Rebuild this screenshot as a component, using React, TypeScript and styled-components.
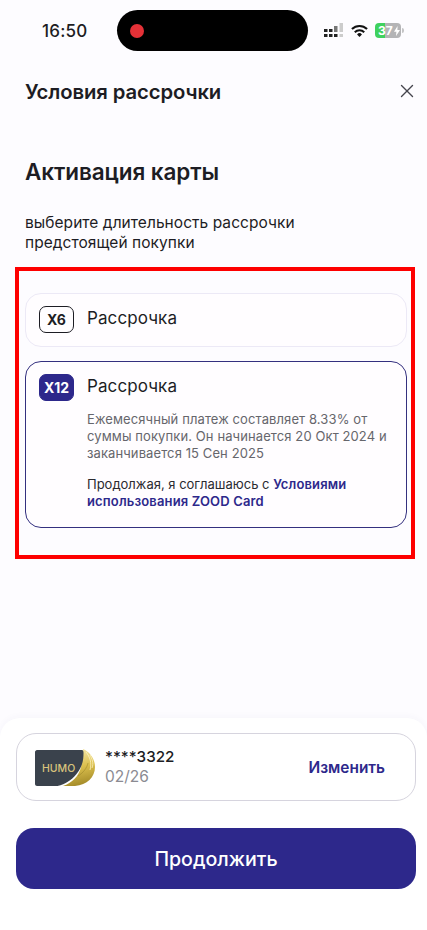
import * as React from "react";
import styled, { createGlobalStyle } from "styled-components";
import { X } from "lucide-react";

const GlobalStyle = createGlobalStyle`
  html, body {
    margin: 0;
    padding: 0;
    background: #fdfcff;
  }
  * {
    box-sizing: border-box;
  }
`;

const Page = styled.div`
  width: 427px;
  height: 930px;
  display: flex;
  flex-direction: column;
  overflow: hidden;
  background: #fdfcff;
  color: #1d1d24;
  font-family: Inter, "Noto Sans", "Liberation Sans", sans-serif;
`;

const StatusBar = styled.div`
  display: flex;
  align-items: center;
  height: 41px;
  margin-top: 10px;
  padding-left: 42px;
`;

const Clock = styled.div`
  width: 75px;
  font-size: 17px;
  font-weight: 500;
  letter-spacing: 0.2px;
`;

const Island = styled.div`
  width: 191px;
  height: 41px;
  display: flex;
  align-items: center;
  padding-left: 13px;
  border-radius: 21px;
  background: #000;
`;

const RecordDot = styled.div`
  width: 14px;
  height: 14px;
  border-radius: 50%;
  background: #e43137;
`;

const StatusIcons = styled.div`
  display: flex;
  align-items: center;
  gap: 7px;
  margin-left: 16px;
`;

const Battery = styled.div`
  position: relative;
  width: 26px;
  height: 15px;
  display: flex;
  align-items: center;
  padding-left: 3px;
  border-radius: 4px;
  background: linear-gradient(90deg, #3fd15f 0 37%, #b4b4b6 37% 100%);
  color: #fff;
  font-size: 12px;
  line-height: 15px;
  font-weight: 700;

  &::after {
    content: "";
    position: absolute;
    right: -3px;
    top: 5px;
    width: 2px;
    height: 5px;
    border-radius: 0 2px 2px 0;
    background: #c4c4c6;
  }
`;

const BatteryBolt = styled.svg`
  width: 6px;
  height: 10px;
  margin-left: 1px;
`;

const Header = styled.div`
  display: flex;
  align-items: center;
  justify-content: space-between;
  height: 30px;
  margin-top: 25px;
  padding: 0 9px 0 25px;
`;

const SheetTitle = styled.div`
  font-size: 20.3px;
  font-weight: 600;
  letter-spacing: -0.1px;
`;

const CloseIcon = styled(X)`
  width: 22px;
  height: 22px;
  color: #45454d;
`;

const Heading = styled.h1`
  margin: 51px 0 0 25px;
  font-size: 22.5px;
  line-height: 30px;
  font-weight: 600;
  letter-spacing: -0.1px;
`;

const Lead = styled.p`
  margin: 26px 0 0 25px;
  font-size: 15.5px;
  line-height: 20px;
  font-weight: 400;
  letter-spacing: 0.05px;
`;

const Highlight = styled.section`
  display: flex;
  flex-direction: column;
  gap: 14px;
  width: 400px;
  height: 292px;
  margin: 14px 0 0 15px;
  padding: 22px 4px 0 6px;
  border: 4px solid #fe0000;
`;

const Option = styled.div<{ $active?: boolean }>`
  padding: 12px 13px;
  min-height: 54px;
  border-radius: 16px;
  border: 1px solid ${(p) => (p.$active ? "#34307f" : "#ece9f6")};
  background: #fffdff;
`;

const OptionHead = styled.div`
  display: flex;
  align-items: flex-start;
  gap: 13px;
`;

const Badge = styled.div<{ $active?: boolean }>`
  width: 35px;
  height: 27px;
  display: flex;
  align-items: center;
  justify-content: center;
  border-radius: 7px;
  border: 1.5px solid ${(p) => (p.$active ? "#2d288b" : "#1d1d24")};
  background: ${(p) => (p.$active ? "#2d288b" : "transparent")};
  color: ${(p) => (p.$active ? "#fff" : "#1d1d24")};
  font-size: 14px;
  font-weight: 700;
`;

const OptionTitle = styled.div`
  font-size: 17px;
  line-height: 24px;
  font-weight: 400;
  letter-spacing: 0.1px;
`;

const OptionBody = styled.div`
  margin: 10px 0 5px 48px;
  font-size: 13px;
  line-height: 17px;
`;

const Terms = styled.p`
  margin: 0;
  color: #66666c;
  letter-spacing: 0.1px;
`;

const Consent = styled.p`
  margin: 14px 0 0;
  color: #2a2a30;
`;

const ConsentLink = styled.span`
  color: #2d288b;
  font-weight: 600;
  letter-spacing: 0.15px;
`;

const Spacer = styled.div`
  flex: 1;
`;

const Sheet = styled.div`
  height: 212px;
  padding: 15px 11px 0 16px;
  border-radius: 20px 20px 0 0;
  background: #fff;
  box-shadow: 0 -2px 6px rgba(60, 50, 120, 0.03);
`;

const CardRow = styled.div`
  display: flex;
  align-items: center;
  height: 68px;
  padding: 0 30px 0 18px;
  border-radius: 20px;
  border: 1px solid #d6d4de;
`;

const CardThumb = styled.svg`
  flex: none;
  width: 60px;
  height: 37px;
`;

const CardInfo = styled.div`
  flex: 1;
  margin-left: 10px;
`;

const CardNumber = styled.div`
  font-size: 15.2px;
  line-height: 20px;
  font-weight: 500;
`;

const CardExpiry = styled.div`
  font-size: 15.5px;
  line-height: 20px;
  color: #8b8b92;
`;

const ChangeLink = styled.div`
  color: #2d288b;
  font-size: 15.4px;
  font-weight: 600;
`;

const ContinueButton = styled.button`
  display: block;
  width: 100%;
  height: 61px;
  margin-top: 27px;
  border: 0;
  border-radius: 18px;
  background: #2d288b;
  color: #fff;
  font-family: inherit;
  font-size: 19.6px;
  font-weight: 500;
`;

function SignalIcon() {
  return (
    <svg width="20" height="15" viewBox="0 0 20 15">
      <g fill="#222">
        <rect x="0" y="6" width="3.5" height="3" />
        <rect x="0" y="11" width="3.5" height="3" />
        <rect x="5" y="6" width="3.5" height="3" />
        <rect x="5" y="11" width="3.5" height="3" />
        <rect x="10" y="11" width="3.5" height="3" />
      </g>
      <rect x="10" y="3" width="3.5" height="6" fill="#777" />
      <rect x="15.500" y="0" width="3.5" height="9" fill="#ccc" />
      <rect x="15.500" y="11" width="3.5" height="3" fill="#ccc" />
    </svg>
  );
}

function WifiIcon() {
  return (
    <svg width="17" height="14" viewBox="0 0 18 14">
      <path d="M1 5a11.5 11.5 0 0 1 16 0" fill="none" stroke="#111" strokeWidth="2.2" />
      <path d="M4 8.2a7.2 7.2 0 0 1 10 0" fill="none" stroke="#111" strokeWidth="2.2" />
      <path d="M6.4 10.6a3.6 3.6 0 0 1 5.2 0L9 13.4z" fill="#111" />
    </svg>
  );
}

function HumoCard() {
  return (
    <CardThumb viewBox="0 0 60 37">
      <defs>
        <linearGradient id="gold" x1="0.3" y1="0" x2="0.5" y2="1">
          <stop offset="0" stopColor="#f6eab0" />
          <stop offset="0.5" stopColor="#dcc04e" />
          <stop offset="1" stopColor="#a38a28" />
        </linearGradient>
      </defs>
      <path d="M48 0c7 3 12 10 12 18 0 10-8 18-20 19H28c9-3 16-10 18-19 1-6 2-12 2-18z" fill="url(#gold)" />
      <path d="M51 3c4 5 6 11 4 18M55 6c2 4 4 8 2 13" fill="none" stroke="#fff8d0" strokeWidth="0.9" opacity="0.8" />
      <path d="M43 27c5-3 9-8 10-13" fill="none" stroke="#8f7a22" strokeWidth="0.8" opacity="0.6" />
      <path d="M2 1h45c1 0 1.500 1 1.500 3 0 8-1.500 14-7 21-5 6-11 10-19 12H2c-1 0-2-1-2-2V3c0-1 1-2 2-2z" fill="#3a424c" />
      <text x="7" y="22.500" fontSize="10.500" fontFamily="Inter, sans-serif" fontWeight="500" fill="#d8c27c">
        HUMO
      </text>
    </CardThumb>
  );
}

export default function App() {
  return (
    <Page>
      <GlobalStyle />
      <StatusBar>
        <Clock>16:50</Clock>
        <Island>
          <RecordDot />
        </Island>
        <StatusIcons>
          <SignalIcon />
          <WifiIcon />
          <Battery>
            37
            <BatteryBolt viewBox="0 0 6 10">
              <path d="M3.600 0L0 5.800h2.400L2 10l4-6H3.400z" fill="#fff" />
            </BatteryBolt>
          </Battery>
        </StatusIcons>
      </StatusBar>
      <Header>
        <SheetTitle>Условия рассрочки</SheetTitle>
        <CloseIcon strokeWidth={1.5} />
      </Header>
      <Heading>Активация карты</Heading>
      <Lead>
        выберите длительность рассрочки
        <br />
        предстоящей покупки
      </Lead>
      <Highlight>
        <Option>
          <OptionHead>
            <Badge>X6</Badge>
            <OptionTitle>Рассрочка</OptionTitle>
          </OptionHead>
        </Option>
        <Option $active>
          <OptionHead>
            <Badge $active>X12</Badge>
            <OptionTitle>Рассрочка</OptionTitle>
          </OptionHead>
          <OptionBody>
            <Terms>
              Ежемесячный платеж составляет 8.33% от
              <br />
              суммы покупки. Он начинается 20 Окт 2024 и
              <br />
              заканчивается 15 Сен 2025
            </Terms>
            <Consent>
              Продолжая, я соглашаюсь с <ConsentLink>Условиями</ConsentLink>
              <br />
              <ConsentLink>использования ZOOD Card</ConsentLink>
            </Consent>
          </OptionBody>
        </Option>
      </Highlight>
      <Spacer />
      <Sheet>
        <CardRow>
          <HumoCard />
          <CardInfo>
            <CardNumber>****3322</CardNumber>
            <CardExpiry>02/26</CardExpiry>
          </CardInfo>
          <ChangeLink>Изменить</ChangeLink>
        </CardRow>
        <ContinueButton>Продолжить</ContinueButton>
      </Sheet>
    </Page>
  );
}
